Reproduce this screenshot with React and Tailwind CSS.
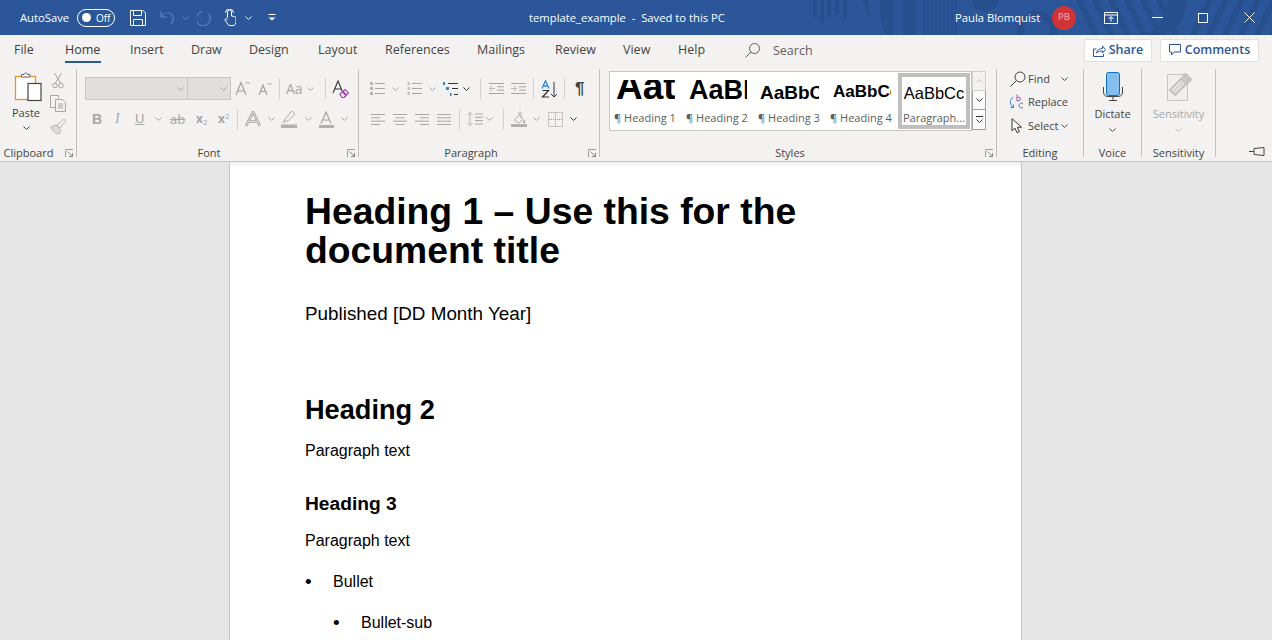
import React from "react";

const G = "#a6a6a6";
const S = ({ w, h, className = "", children }) => (
  <svg width={w} height={h} viewBox={`0 0 ${w} ${h}`} fill="none" className={`shrink-0 block ${className}`}>
    {children}
  </svg>
);
const Chev = ({ c = G, className = "" }) => (
  <S w={7} h={4} className={className}><path d="M.5.5l3 3 3-3" stroke={c} /></S>
);
const Launcher = () => (
  <S w={9} h={9}>
    <path d="M.5 8V.5H8" stroke="#a19f9d" />
    <path d="M2.5 2.5L7.5 7.5M4 7.5h3.5V4" stroke="#8a8886" />
  </S>
);
const Sep = () => <div className="w-px h-[88px] mt-[4px] bg-[#c2c0be] shrink-0" />;
const VBar = ({ className = "" }) => <div className={`w-px h-[21px] bg-[#d2d0ce] shrink-0 ${className}`} />;

function Group({ w, label, launcher, pr = 0, children }) {
  return (
    <div className="flex flex-col shrink-0 h-[96px]" style={{ width: w }}>
      <div className="flex-1 min-h-0">{children}</div>
      <div className="h-[16px] flex items-center">
        <div className="flex-1 text-center leading-[16px] text-[#444]" style={{ paddingRight: pr }}>{label}</div>
        {launcher && <div className="w-[11px] shrink-0"><Launcher /></div>}
      </div>
    </div>
  );
}

const AlignIcon = ({ kind, className }) => {
  const rows = {
    left: [[0, 14], [0, 9], [0, 14], [0, 9]],
    center: [[0, 14], [2.5, 11.5], [0, 14], [2.5, 11.5]],
    right: [[0, 14], [5, 14], [0, 14], [5, 14]],
    just: [[0, 14], [0, 14], [0, 14], [0, 14]],
  }[kind];
  return (
    <S w={14} h={13} className={className}>
      {rows.map(([a, b], i) => <path key={i} d={`M${a} ${1.5 + i * 3.33}H${b}`} stroke={G} />)}
    </S>
  );
};
const Bullets = ({ className }) => (
  <S w={16} h={15} className={className}>
    {[1, 6, 11].map((y) => <React.Fragment key={y}><rect x="0" y={y} width="3" height="3" fill="#b5b5b5" /><path d={`M5 ${y + 1.5}H15`} stroke={G} /></React.Fragment>)}
  </S>
);
const Numbers = ({ className }) => (
  <S w={16} h={15} className={className}>
    {[1, 6, 11].map((y) => <React.Fragment key={y}><rect x="0.5" y={y} width="2.5" height="3" fill="#c4c4c4" /><path d={`M5 ${y + 1.5}H15`} stroke={G} /></React.Fragment>)}
  </S>
);
const Multi = ({ className }) => (
  <S w={16} h={16} className={className}>
    <rect x="0" y="1" width="2" height="3" fill="#2b88d8" />
    <rect x="3" y="6" width="3" height="3" fill="#2b88d8" />
    <rect x="7" y="12" width="1.5" height="3" fill="#2b88d8" />
    <path d="M5 2.5H15M9 7.5H15M11 13.5H15" stroke="#333" />
  </S>
);
const Indent = ({ flip, className }) => (
  <S w={15} h={13} className={className}>
    <path d="M0 1.5H15M8 4.8H15M8 8.1H15M0 11.5H15" stroke={G} />
    {flip
      ? <path d="M6 6.5H.5M3 4L.5 6.5 3 9" stroke="#b8b8b8" />
      : <path d="M0 6.5H5.5M3 4l2.5 2.5L3 9" stroke="#b8b8b8" />}
  </S>
);

function Clipboard() {
  return (
    <div className="flex pt-[7px]">
      <div className="w-[49px] pl-[3px] flex flex-col items-center">
        <S w={28} h={31} className="ml-[3px] -mt-[1px]">
          <rect x="1.5" y="5.5" width="20" height="23" fill="#fff" stroke="#e8912b" strokeWidth="1.3" />
          <path d="M7.5 5.5V3.5h2.5c.5-2 3-2 3.5 0H16v2.5H7.5z" fill="#fff" stroke="#666" />
          <rect x="14" y="12.5" width="13" height="17" fill="#fff" stroke="#444" strokeWidth="1.2" />
        </S>
        <div className="leading-[14px] mt-[4px] text-[#444]">Paste</div>
        <Chev c="#444" className="mt-[6px]" />
      </div>
      <div className="flex flex-col items-center w-[18px]">
        <S w={12} h={17}>
          <path d="M2.5 1l6 10M9.5 1l-6 10" stroke={G} />
          <circle cx="3" cy="13.5" r="2.3" stroke={G} />
          <circle cx="9" cy="13.5" r="2.3" stroke={G} />
        </S>
        <S w={17} h={17} className="mt-[6px]">
          <path d="M.5.5h8v3M.5.5v12h5" stroke={G} />
          <path d="M5.5 4.5h7l3 3v9h-10z M8 9h5M8 11h5M8 13h5" stroke={G} />
        </S>
        <S w={17} h={16} className="mt-[7px]">
          <path d="M1 8l5-2 5 6-2 3c-3 0-7-3-8-7z" stroke="#b5b5b5" fill="#ddd" />
          <path d="M7 6l7-6 2 2-6 7z" stroke="#b5b5b5" />
        </S>
      </div>
    </div>
  );
}

const AIcon = ({ bar, className, stroke }) => (
  <S w={15} h={17} className={className}>
    <path d="M2 12.5L7 1l5 11.5M3.5 9h7" stroke={stroke || "#8f8f8f"} strokeWidth="1.2" />
    <rect x="0" y="14" width="15" height="3" fill={bar} />
  </S>
);

function Font() {
  return (
    <div>
      <div className="flex items-center pt-[12px] pl-[8px] h-[35px]">
        <div className="w-[103px] h-[23px] border border-[#c8c6c4] bg-[#e1dfdd] flex items-center justify-end pr-[3px]"><Chev c="#a6a6a6" /></div>
        <div className="w-[43px] h-[23px] border border-[#c8c6c4] border-l-0 bg-[#e1dfdd] flex items-center justify-end pr-[3px]"><Chev c="#a6a6a6" /></div>
        <S w={15} h={15} className="ml-[4px]"><path d="M1 14L6 1.5 11 14M2.5 10h7" stroke="#a0a0a0" strokeWidth="1.2" /><path d="M10.5 3l2-2 2 2" stroke="#a0a0a0" /></S>
        <S w={14} h={13} className="ml-[8px]"><path d="M1 13L5 3l4 10M2.3 9.5h5.4" stroke="#a0a0a0" strokeWidth="1.2" /><path d="M9.5 1l2 2 2-2" stroke="#a0a0a0" /></S>
        <VBar className="ml-[7px]" />
        <div className="ml-[6px] text-[14px] leading-[16px] text-[#a6a6a6] w-[18px]">Aa</div>
        <Chev className="ml-[3px]" />
        <VBar className="ml-[11px]" />
        <S w={17} h={18} className="ml-[6px]">
          <path d="M1 13L6 1l5 12M2.6 9h6.8" stroke="#333" strokeWidth="1.1" />
          <path d="M8 14l5-4.5 3.5 3.5-4.5 4.5h-2z" stroke="#a03ab5" fill="#fff" strokeWidth="1.2" />
          <path d="M11 12l3 3" stroke="#a03ab5" strokeWidth="2" />
        </S>
      </div>
      <div className="flex items-center h-[22px] mt-[8px] pl-[15px] text-[#a6a6a6]">
        <div className="w-[9px] text-[14px] font-bold leading-[16px] font-['Liberation_Sans',sans-serif]">B</div>
        <div className="w-[9px] ml-[14px] text-[14px] italic leading-[16px] font-['Liberation_Serif',serif]">I</div>
        <div className="w-[10px] ml-[11px] text-[13px] leading-[14px] underline font-['Liberation_Sans',sans-serif]">U</div>
        <Chev className="ml-[10px]" />
        <div className="ml-[8px] w-[15px] text-[13px] leading-[14px] line-through">ab</div>
        <div className="ml-[11px] w-[13px] text-[12px] font-bold leading-[14px]">x<sub className="text-[8px] font-normal">2</sub></div>
        <div className="ml-[9px] w-[13px] text-[12px] font-bold leading-[14px]">x<sup className="text-[8px] font-normal">2</sup></div>
        <VBar className="ml-[6px]" />
        <S w={16} h={16} className="ml-[7px]"><path d="M1 15L8 1l7 14M3.5 10.5h9" stroke="#a6a6a6" strokeWidth="2.6" /><path d="M1 15L8 1l7 14M3.5 10.5h9" stroke="#f3f2f1" strokeWidth=".7" /></S>
        <Chev className="ml-[7px]" />
        <S w={16} h={18} className="ml-[6px]">
          <path d="M3 11l2-3 6-7 3 3-7 7z" stroke="#b0b0b0" />
          <path d="M1 13l2-2 2 1z" fill="#b0b0b0" />
          <rect x="0" y="14.5" width="16" height="3.5" fill="#b3b0ad" />
        </S>
        <Chev className="ml-[8px]" />
        <AIcon bar="#b3b0ad" stroke="#a6a6a6" className="ml-[7px]" />
        <Chev className="ml-[7px]" />
      </div>
    </div>
  );
}

function Paragraph() {
  return (
    <div>
      <div className="flex items-center pt-[12px] pl-[11px] h-[35px]">
        <Bullets />
        <Chev className="ml-[6px]" />
        <Numbers className="ml-[8px]" />
        <Chev className="ml-[6px]" />
        <Multi className="ml-[7px]" />
        <Chev c="#333" className="ml-[4px]" />
        <VBar className="ml-[10px]" />
        <Indent flip className="ml-[8px]" />
        <Indent className="ml-[7px]" />
        <VBar className="ml-[7px]" />
        <S w={16} h={18} className="ml-[7px]">
          <path d="M1 8.500L4.500 .7 8 8.500M2.200 6h4.600" stroke="#2b88d8" strokeWidth="1.300" />
          <path d="M1.500 10.500h6L1.500 17H8" stroke="#333" strokeWidth="1.200" />
          <path d="M13 2v15M10 14l3 3 3-3" stroke="#333" />
        </S>
        <VBar className="ml-[7px]" />
        <div className="ml-[10px] w-[11px] text-[17px] font-bold leading-[18px] text-[#444] font-['Liberation_Sans',sans-serif]">¶</div>
      </div>
      <div className="flex items-center h-[22px] mt-[8px] pl-[12px]">
        <AlignIcon kind="left" />
        <AlignIcon kind="center" className="ml-[8px]" />
        <AlignIcon kind="right" className="ml-[8px]" />
        <AlignIcon kind="just" className="ml-[8px]" />
        <VBar className="ml-[8px]" />
        <S w={16} h={14} className="ml-[7px]">
          <path d="M3 .5v13M.5 3L3 .5 5.500 3M.5 11L3 13.500 5.500 11" stroke="#b5b5b5" />
          <path d="M8 2h8M8 5.300h8M8 8.600h8M8 12h8" stroke={G} />
        </S>
        <Chev className="ml-[3px]" />
        <VBar className="ml-[10px]" />
        <S w={17} h={16} className="ml-[7px]">
          <path d="M3 9l5-5 4 4-4 4z" stroke="#b0b0b0" />
          <path d="M8 4V1.500c0-1 2-1 2 0V7M13 9l1 2.500-2 0z" stroke="#b0b0b0" />
          <rect x="0" y="13" width="16" height="3" fill="#b3b0ad" />
        </S>
        <Chev className="ml-[5px]" />
        <S w={15} h={15} className="ml-[8px]">
          <rect x=".5" y=".5" width="14" height="14" stroke="#9a9a9a" strokeDasharray="1 1" />
          <path d="M7.500 1v13M1 7.500h13" stroke="#9a9a9a" strokeDasharray="1 1" />
        </S>
        <Chev c="#333" className="ml-[7px]" />
      </div>
    </div>
  );
}

const cells = [
  { w: 73, pl: 4, inset: 2, box: 61, label: "¶ Heading 1", t: "Aat", f: 37, lh: 31 },
  { w: 72, pl: 3, inset: 3, box: 61, label: "¶ Heading 2", t: "AaBl", f: 27, lh: 24 },
  { w: 72, pl: 3, inset: 2, box: 61, label: "¶ Heading 3", t: "AaBbC", f: 19, lh: 18 },
  { w: 71, pl: 3, inset: 3, box: 61, label: "¶ Heading 4", t: "AaBbCc", f: 17, lh: 20 },
];

function Styles() {
  return (
    <div className="flex pt-[6px] pl-[9px]">
      <div className="flex h-[60px] w-[363px] bg-white border border-[#c8c6c4] overflow-hidden">
        {cells.map((c) => (
          <div key={c.label} className="shrink-0 flex flex-col h-full" style={{ width: c.w, paddingLeft: c.pl }}>
            <div className="h-[22px] mt-[8px] overflow-hidden flex items-end justify-start" style={{ width: c.box, paddingLeft: c.inset }}>
              <div
                className="whitespace-nowrap text-black font-bold font-['Liberation_Sans',sans-serif]"
                style={{ fontSize: c.f, lineHeight: `${c.lh}px` }}
              >
                {c.t}
              </div>
            </div>
            <div className="mt-[9px] leading-[14px] text-[#605e5c] whitespace-nowrap">{c.label}</div>
          </div>
        ))}
        <div className="w-[72px] h-[56px] mt-[1px] shrink-0 border-[4px] border-[#bfbfbf] flex flex-col items-center overflow-hidden">
          <div className="h-[22px] mt-[3px] flex items-end text-[16.500px] leading-[18px] text-black whitespace-nowrap font-['Liberation_Sans',sans-serif]">AaBbCc</div>
          <div className="mt-[9px] leading-[14px] text-[#605e5c] whitespace-nowrap">Paragraph...</div>
        </div>
      </div>
      <div className="flex flex-col">
        <div className="w-[14px] h-[20px] border border-[#d2d0ce] flex items-center justify-center"><S w={7} h={4}><path d="M.5 3.500l3-3 3 3" stroke="#c8c6c4" /></S></div>
        <div className="w-[14px] h-[19px] border border-t-0 border-[#a19f9d] bg-[#fbfbfb] flex items-center justify-center"><Chev c="#333" /></div>
        <div className="w-[14px] h-[20px] border border-t-0 border-[#a19f9d] bg-[#fbfbfb] flex flex-col items-center justify-center gap-[2px]"><div className="w-[7px] h-px bg-[#333]" /><Chev c="#333" /></div>
      </div>
    </div>
  );
}

function Editing() {
  return (
    <div className="flex flex-col pt-[2px] pl-[13px] text-[#444]">
      <div className="flex items-center h-[23.500px]">
        <S w={16} h={16}><circle cx="10" cy="6" r="5" stroke="#444" /><path d="M6.500 9.500L.5 15.500" stroke="#444" /></S>
        <div className="ml-[2px] leading-[16px]">Find</div>
        <Chev c="#444" className="ml-[11px]" />
      </div>
      <div className="flex items-center h-[23.500px]">
        <S w={15} h={16} className="-ml-[1px]">
          <path d="M4.500 3C1 5-.5 10 4.500 13.500M4.500 13.500H1.500M4.500 13.500V10.500" stroke="#2b88d8" />
          <path d="M8 .5v6.500M8 4c1-1.200 3.500-1 3.500.8S9 7.800 8 6.500" stroke="#b146c2" />
          <path d="M14 9.500c-2-1-4 0-4 2s2 3 4 2" stroke="#2b88d8" />
        </S>
        <div className="ml-[4px] leading-[16px]">Replace</div>
      </div>
      <div className="flex items-center h-[23.500px]">
        <S w={13} h={16} className="ml-[1px]"><path d="M1 .7v12l3-2.500 2 4.500 2.300-1-2-4.500h4.200z" stroke="#333" fill="#fff" /></S>
        <div className="ml-[4px] leading-[16px]">Select</div>
        <Chev c="#444" className="ml-[3px]" />
      </div>
    </div>
  );
}

function Voice() {
  return (
    <div className="flex flex-col items-center pt-[7px] text-[#444]">
      <S w={20} h={30}>
        <rect x="3.500" y=".5" width="13" height="23" rx="2" fill="#83beec" stroke="#106ebe" />
        <path d="M.5 15v5c0 3 2 4.500 4 4.500h11c2 0 4-1.500 4-4.500v-5" stroke="#444" />
        <path d="M10 24.500v4M6 28.500h8" stroke="#444" />
      </S>
      <div className="leading-[14px] mt-[5px]">Dictate</div>
      <Chev c="#444" className="mt-[7px]" />
    </div>
  );
}

function Sensitivity() {
  return (
    <div className="flex flex-col items-center pt-[7px] text-[#a6a6a6]">
      <S w={28} h={30}>
        <rect x="2.500" y="2.500" width="20" height="26" fill="#f0efee" stroke="#c8c6c4" />
        <g transform="rotate(-45 15 13)">
          <rect x="4" y="9" width="17" height="8" fill="#d0cfce" stroke="#b8b6b4" />
          <path d="M6 11.500h13M6 14.500h13" stroke="#f0efee" />
          <rect x="22" y="8" width="6" height="10" rx="1" fill="#c8c6c4" />
        </g>
      </S>
      <div className="leading-[14px] mt-[5px]">Sensitivity</div>
      <Chev c="#bdbdbd" className="mt-[7px]" />
    </div>
  );
}

const tabs = [["File", 51], ["Home", 65], ["Insert", 61], ["Draw", 58], ["Design", 69], ["Layout", 67], ["References", 92], ["Mailings", 78], ["Review", 68], ["View", 55], ["Help", 67]];

function Pattern() {
  const c = "#264f8e";
  return (
    <svg width="459" height="35" viewBox="0 0 459 35" className="absolute right-0 top-0" fill="none">
      {[[0, 17], [7, 22], [14, 17], [22, 14], [30, 20]].map(([x, h]) => <rect key={x} x={x} y="0" width="4" height={h} fill={c} />)}
      <path d="M49 0h7v16z" fill={c} />
      <path d="M67 0h13v35h-6C70 28 67 22 67 14z" fill={c} />
      <rect x="90" y="0" width="13" height="35" fill={c} />
      {[110, 114, 118, 122, 126, 130, 134, 138, 142].map((x) => <rect key={x} x={x} y="0" width="2" height="35" fill={c} />)}
      <path d="M159 0h26c0 7-6 12-13 12S159 7 159 0z" fill={c} />
      <circle cx="224" cy="31" r="17" stroke={c} strokeWidth="7" />
      {[0, 1, 2, 3, 4, 5].map((i) => <path key={i} d={`M${265 + i * 16} -2L${284 + i * 16} 37`} stroke={c} strokeWidth="6" />)}
      <path d="M355 0h19c-1 14-8 27-20 35h-24c13-6 24-18 25-35z" fill={c} />
      {[0, 1, 2, 3, 4, 5].map((i) => <path key={i} d={`M${398 + i * 16 - 19} 37L${398 + i * 16} -2`} stroke={c} strokeWidth="6" />)}
    </svg>
  );
}

function TitleBar() {
  return (
    <div className="relative h-[35px] bg-[#2b579a] flex items-center text-white shrink-0">
      <Pattern />
      <div className="relative flex items-center w-full text-[11.250px]">
        <div className="ml-[20px] w-[50px] whitespace-nowrap leading-[16px]">AutoSave</div>
        <div className="ml-[7px] w-[38px] h-[18px] rounded-full border border-white flex items-center pl-[4px] gap-[5px]">
          <div className="w-[9px] h-[9px] rounded-full bg-white" />
          <div className="text-[10px] leading-[12px]">Off</div>
        </div>
        <S w={16} h={16} className="ml-[15px]">
          <path d="M.5.5h12.500l2.500 2.500v12.500H.5z" stroke="#fff" />
          <path d="M3.500.5v5h8v-5M3.500 15.500v-6h9v6" stroke="#fff" />
        </S>
        <S w={15} h={16} className="ml-[14px]">
          <path d="M1 1v6h6M1 7c3-4 7-5 10-3s3 7 0 10" stroke="#5f84bc" strokeWidth="1.100" />
        </S>
        <Chev c="#5f84bc" className="ml-[7px]" />
        <S w={16} h={16} className="ml-[8px]">
          <path d="M11 3.500A7 7 0 1 1 5 1.800" stroke="#5f84bc" strokeWidth="1.100" />
          <path d="M12 .5v4H8" stroke="#2b579a" />
        </S>
        <S w={12} h={17} className="ml-[11px]">
          <path d="M3.500 9V3a2 2 0 0 1 4 0v4l3 .5c1 .2 1.500 1 1.500 2v3c0 2-1 4-3 4H6c-1.500 0-2-1-3-2.500L1 11c-.5-1 1-2 2.500-.5" stroke="#fff" />
          <path d="M1.500 4a4 4 0 0 1 8 0" stroke="#fff" />
        </S>
        <Chev c="#fff" className="ml-[9px]" />
        <S w={8} h={7} className="ml-[16px]">
          <path d="M.5.5h7" stroke="#fff" />
          <path d="M.5 3.500l3.500 3 3.500-3z" fill="#fff" />
        </S>
        <div className="ml-[253px] w-[199px] whitespace-pre leading-[16px]">template_example  -  Saved to this PC</div>
        <div className="ml-[227px] w-[86px] whitespace-nowrap leading-[16px]">Paula Blomquist</div>
        <div className="ml-[11px] w-[24px] h-[24px] rounded-full bg-[#d13438] flex items-center justify-center text-[9.500px] text-[#f5b5b5]">PB</div>
        <S w={14} h={12} className="ml-[28px]">
          <path d="M.5.5h13v11H.5zM.5 3h13" stroke="#fff" />
          <path d="M7 9.500V5M4.500 7L7 4.500 9.500 7" stroke="#fff" />
        </S>
        <div className="ml-[34px] w-[11px] h-px bg-white" />
        <div className="ml-[35px] w-[10px] h-[10px] border border-white" />
        <S w={11} h={11} className="ml-[36px]"><path d="M.5.5l10 10M10.500.5l-10 10" stroke="#fff" /></S>
      </div>
    </div>
  );
}

function Tabs() {
  return (
    <div className="h-[30px] flex items-center pl-[14px] pt-[1px] text-[12.500px] text-[#444] shrink-0">
      {tabs.map(([t, w]) => (
        <div key={t} className="shrink-0" style={{ width: w }}>
          <span className={`relative inline-block leading-[16px] ${t === "Home" ? "font-medium text-[#3b3a39]" : ""}`}>
            {t}
            {t === "Home" && <span className="absolute left-0 right-[-1px] top-[19px] h-[2px] bg-[#2b579a]" />}
          </span>
        </div>
      ))}
      <S w={15} h={15}><circle cx="9.500" cy="5.500" r="5" stroke="#605e5c" /><path d="M6 9L.5 14.500" stroke="#605e5c" /></S>
      <div className="ml-[13px] w-[40px] leading-[16px] text-[#605e5c]">Search</div>
      <div className="ml-[271px] w-[68px] h-[23px] -mt-[1px] bg-white border border-[#e1dfdd] rounded-[2px] flex items-center justify-center gap-[3px] text-[#2b579a] font-semibold">
        <S w={13} h={13}>
          <path d="M.5 5v7.500h10V10M.5 5h3" stroke="#2b579a" />
          <path d="M3.500 9c.5-3 3-4.500 6-4.500V2l3 3.500-3 3.500V7c-2.500 0-4.500.5-6 2z" stroke="#2b579a" />
        </S>
        Share
      </div>
      <div className="ml-[8px] w-[99px] h-[23px] -mt-[1px] bg-white border border-[#e1dfdd] rounded-[2px] flex items-center justify-center gap-[4px] text-[#2b579a] font-semibold">
        <S w={12} h={12}><path d="M.5.5h11v7.500H5L2.500 11V8h-2z" stroke="#2b579a" /></S>
        Comments
      </div>
    </div>
  );
}

function Ribbon() {
  return (
    <div className="flex h-[97px] text-[11px] shrink-0 border-b border-[#c8c6c4]">
      <Group w={76} label="Clipboard" launcher pr={8}><Clipboard /></Group><Sep />
      <Group w={281} label="Font" launcher pr={6}><Font /></Group><Sep />
      <Group w={240} label="Paragraph" launcher pr={5}><Paragraph /></Group><Sep />
      <Group w={396} label="Styles" launcher pr={5}><Styles /></Group><Sep />
      <Group w={86} label="Editing"><Editing /></Group><Sep />
      <Group w={57} label="Voice"><Voice /></Group><Sep />
      <Group w={73} label="Sensitivity"><Sensitivity /></Group><Sep />
      <div className="ml-[33px] mt-[82px]">
        <S w={16} h={9}><path d="M0 4.500h5M5 1.500l10-1v8l-10-1z" stroke="#444" /></S>
      </div>
    </div>
  );
}

const Bullet = () => <span className="w-[28px] text-[19px] leading-[18px]">•</span>;

function Doc() {
  return (
    <div className="flex-1 min-h-0 bg-[#e6e6e6] overflow-hidden pl-[229px]">
      <div className="w-[793px] h-full bg-white border-x border-[#c6c6c6] pl-[75px] text-black font-['Liberation_Sans',sans-serif] bg-gradient-to-b from-[#eeeeee] to-white to-[6px]">
        <h1 className="pt-[30px] w-[600px] text-[37.300px] font-bold leading-[39px]">Heading 1 – Use this for the document title</h1>
        <p className="mt-[32px] text-[18.850px] leading-[24px]">Published [DD Month Year]</p>
        <h2 className="mt-[68px] text-[27.170px] font-bold leading-[32px]">Heading 2</h2>
        <p className="mt-[16px] text-[16px] leading-[18px]">Paragraph text</p>
        <h3 className="mt-[32px] text-[19.200px] font-bold leading-[24px]">Heading 3</h3>
        <p className="mt-[16px] text-[16px] leading-[18px]">Paragraph text</p>
        <div className="mt-[23px] flex text-[16px] leading-[18px]"><Bullet />Bullet</div>
        <div className="mt-[23px] ml-[28px] flex text-[16px] leading-[18px]"><Bullet />Bullet-sub</div>
      </div>
    </div>
  );
}

export default function App() {
  return (
    <div className="w-[1272px] h-[640px] overflow-hidden flex flex-col bg-[#f3f2f1] font-['Open_Sans',sans-serif] text-[11.500px]">
      <TitleBar />
      <Tabs />
      <Ribbon />
      <Doc />
    </div>
  );
}
